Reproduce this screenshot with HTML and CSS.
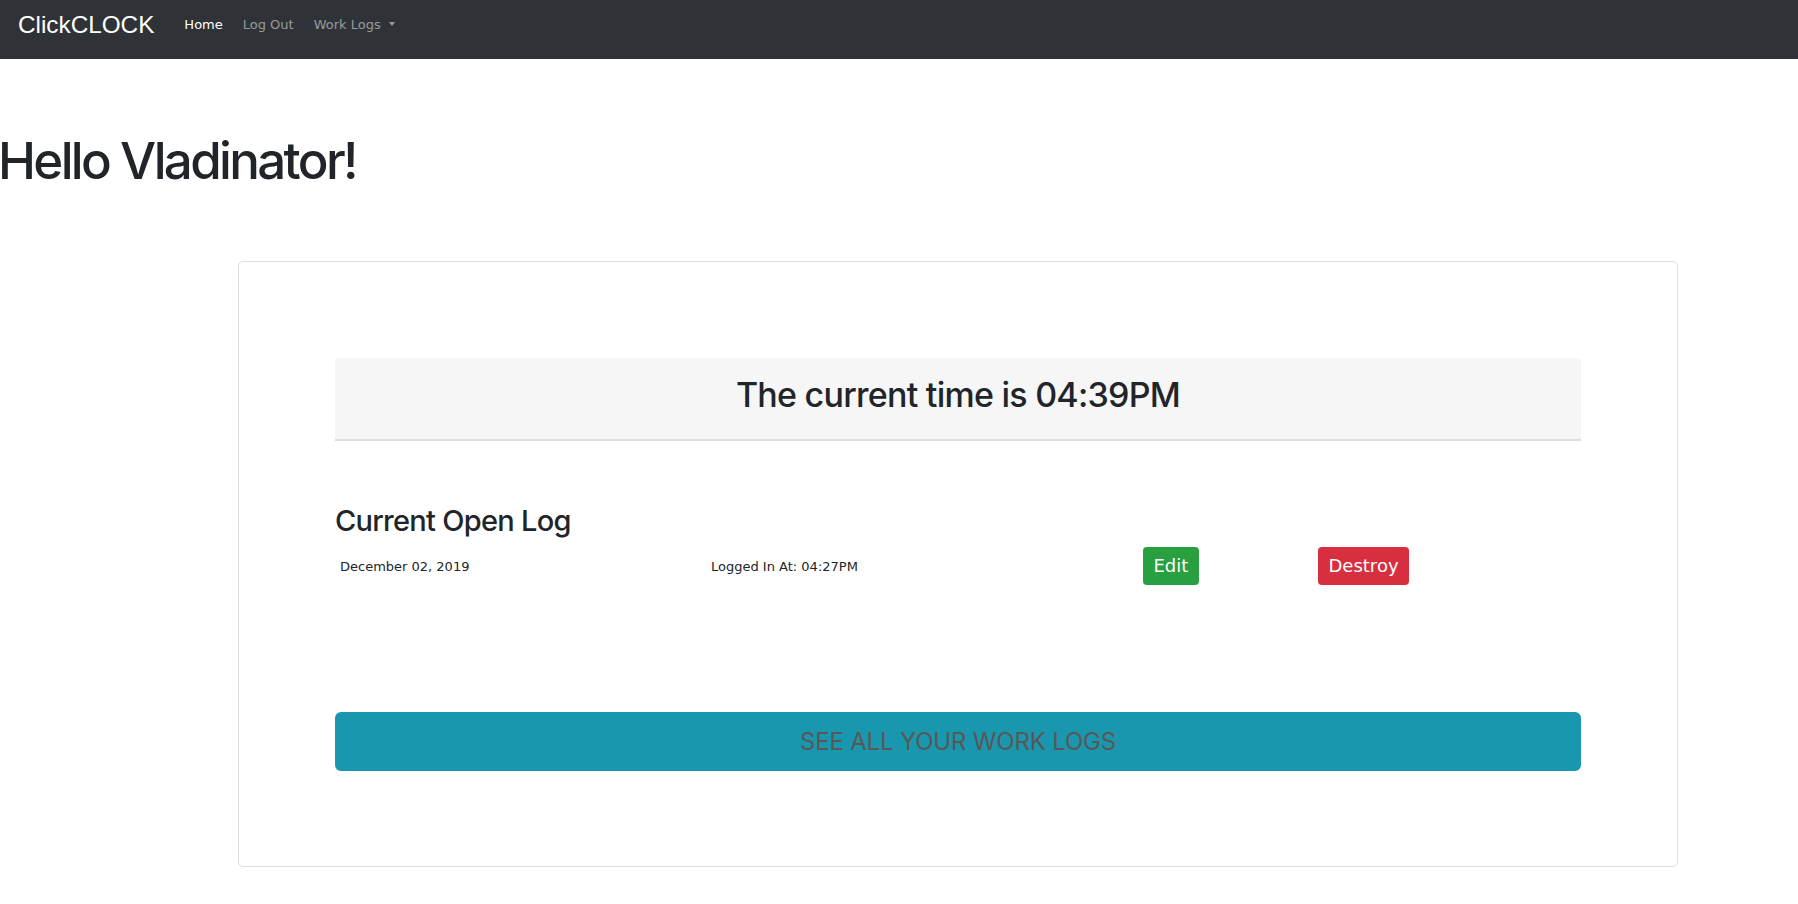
FILE: index.html
```html
<!DOCTYPE html>
<html lang="en">
<head>
<meta charset="utf-8">
<title>ClickCLOCK</title>
<link rel="stylesheet" href="styles.css">
</head>
<body>
<nav class="navbar">
  <a class="brand" href="#">ClickCLOCK</a>
  <ul class="nav">
    <li><a class="nav-link active" href="#">Home</a></li>
    <li><a class="nav-link" href="#">Log Out</a></li>
    <li><a class="nav-link dropdown-toggle" href="#">Work Logs</a></li>
  </ul>
</nav>
<main class="page">
  <h1 class="greeting">Hello Vladinator!</h1>
  <section class="card">
    <div class="clock">
      <h2 class="clock-text">The current time is 04:39PM</h2>
    </div>
    <h3 class="log-title">Current Open Log</h3>
    <div class="log-row">
      <div class="cell">December 02, 2019</div>
      <div class="cell">Logged In At: 04:27PM</div>
      <div class="cell"><a class="btn btn-edit" href="#">Edit</a></div>
      <div class="cell"><a class="btn btn-destroy" href="#">Destroy</a></div>
    </div>
    <a class="btn-all" href="#">SEE ALL YOUR WORK LOGS</a>
  </section>
</main>
</body>
</html>
```
FILE: styles.css
```css
* { box-sizing: border-box; }
html, body { margin: 0; padding: 0; background: #fff; }
body { color: #212529; font-family: "Inter", "Liberation Sans", sans-serif; }
a { text-decoration: none; }

.navbar {
  display: flex;
  align-items: flex-start;
  height: 59px;
  padding: 0 18px;
  background: #2f3338;
}
.brand {
  padding-top: 13px;
  font-family: "Liberation Sans", Arial, sans-serif;
  font-size: 24.3px;
  line-height: 24px;
  color: #fff;
  margin-right: 20px;
}
.nav {
  display: flex;
  list-style: none;
  margin: 0;
  padding: 17px 0 0;
}
.nav-link {
  display: block;
  padding: 0 10px;
  font-family: "DejaVu Sans", Verdana, sans-serif;
  font-size: 13px;
  line-height: 15px;
  color: rgba(255, 255, 255, 0.5);
}
.nav-link.active { color: #fff; }
.dropdown-toggle::after {
  content: "";
  display: inline-block;
  margin-left: 8px;
  vertical-align: 3px;
  border-top: 4px solid rgba(255, 255, 255, 0.5);
  border-left: 3.5px solid transparent;
  border-right: 3.5px solid transparent;
}

.page { padding: 0; }
.greeting {
  margin: 72px 0 0 -2px;
  font-size: 51px;
  line-height: 60px;
  font-weight: 500;
  letter-spacing: -0.052em;
}

.card {
  margin: 70px 0 40px 238px;
  width: 1440px;
  border: 1px solid #dfdfdf;
  border-radius: 5px;
  padding: 96px 96px 95px;
  display: flex;
  flex-direction: column;
}
.clock {
  background: #f6f6f6;
  border-bottom: 2px solid #dedede;
  border-radius: 4px 4px 0 0;
  padding-bottom: 8px;
}
.clock-text {
  margin: 0;
  text-align: center;
  font-size: 34px;
  line-height: 73px;
  font-weight: 500;
  letter-spacing: -0.022em;
}
.log-title {
  margin: 62px 0 0;
  font-size: 29px;
  line-height: 35px;
  font-weight: 500;
  letter-spacing: -0.025em;
}
.log-row {
  margin-top: 9px;
  display: grid;
  grid-template-columns: 371px 432px 175px 1fr;
  align-items: center;
  height: 38px;
  font-family: "DejaVu Sans", Verdana, sans-serif;
  font-size: 13px;
}
.cell { padding-left: 5px; }
.cell-time { letter-spacing: 0.2px; }
.btn {
  display: inline-block;
  height: 38px;
  line-height: 38px;
  padding: 0 10.5px;
  border-radius: 4px;
  color: #fff;
  font-family: "DejaVu Sans", Verdana, sans-serif;
  font-size: 18px;
}
.btn-edit { background: #28a03f; }
.btn-destroy { background: #d72f3f; }

.btn-all {
  display: block;
  margin-top: 127px;
  height: 59px;
  line-height: 59px;
  border-radius: 6px;
  background: #1997ae;
  color: #5a5757;
  text-align: center;
  font-size: 24px;
  letter-spacing: -0.008em;
}
```
